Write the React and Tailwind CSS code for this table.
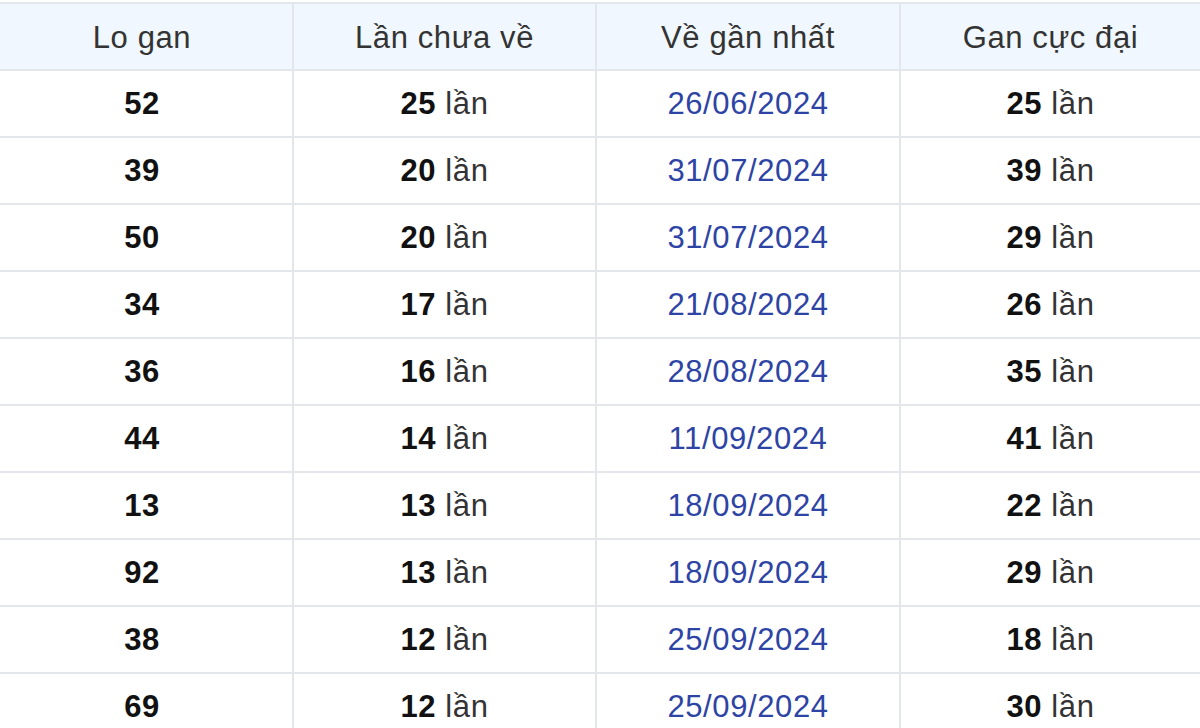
import React from "react";

const rows = [
  ["52", "25", "26/06/2024", "25"],
  ["39", "20", "31/07/2024", "39"],
  ["50", "20", "31/07/2024", "29"],
  ["34", "17", "21/08/2024", "26"],
  ["36", "16", "28/08/2024", "35"],
  ["44", "14", "11/09/2024", "41"],
  ["13", "13", "18/09/2024", "22"],
  ["92", "13", "18/09/2024", "29"],
  ["38", "12", "25/09/2024", "18"],
  ["69", "12", "25/09/2024", "30"],
];

export default function App() {
  return (
    <div
      className="w-[1200px] h-[728px] overflow-hidden bg-white"
      style={{ fontFamily: '"Liberation Sans", Arial, sans-serif' }}
    >
      <div className="mt-[2px] border-t-2 border-[#e3e6ea]">
        <div className="grid grid-cols-[292px_303px_304px_301px] h-[65px] bg-[#f0f7fe] text-[31px] tracking-[0.6px] text-[#333]">
          <div className="flex items-center justify-center pr-[8px] pt-[4px]">Lo gan</div>
          <div className="flex items-center justify-center border-l-2 border-[#e3e6ea] pt-[4px]">Lần chưa về</div>
          <div className="flex items-center justify-center border-l-2 border-[#e3e6ea] pt-[4px]">Về gần nhất</div>
          <div className="flex items-center justify-center border-l-2 border-[#e3e6ea] pt-[4px]">Gan cực đại</div>
        </div>
        {rows.map((r, i) => (
          <div
            key={i}
            className="grid grid-cols-[292px_303px_304px_301px] h-[67px] border-t-2 border-[#e3e6ea] text-[31px] tracking-[0.6px] text-[#333]"
          >
            <div className="flex items-center justify-center pr-[8px] pt-[2px] font-bold text-[#111]">{r[0]}</div>
            <div className="flex items-center justify-center border-l-2 border-[#e3e6ea] pt-[2px] whitespace-pre">
              <span className="font-bold text-[#111]">{r[1]}</span> lần
            </div>
            <div className="flex items-center justify-center border-l-2 border-[#e3e6ea] pt-[2px] text-[#2d44a4]">
              {r[2]}
            </div>
            <div className="flex items-center justify-center border-l-2 border-[#e3e6ea] pt-[2px] whitespace-pre">
              <span className="font-bold text-[#111]">{r[3]}</span> lần
            </div>
          </div>
        ))}
      </div>
    </div>
  );
}
